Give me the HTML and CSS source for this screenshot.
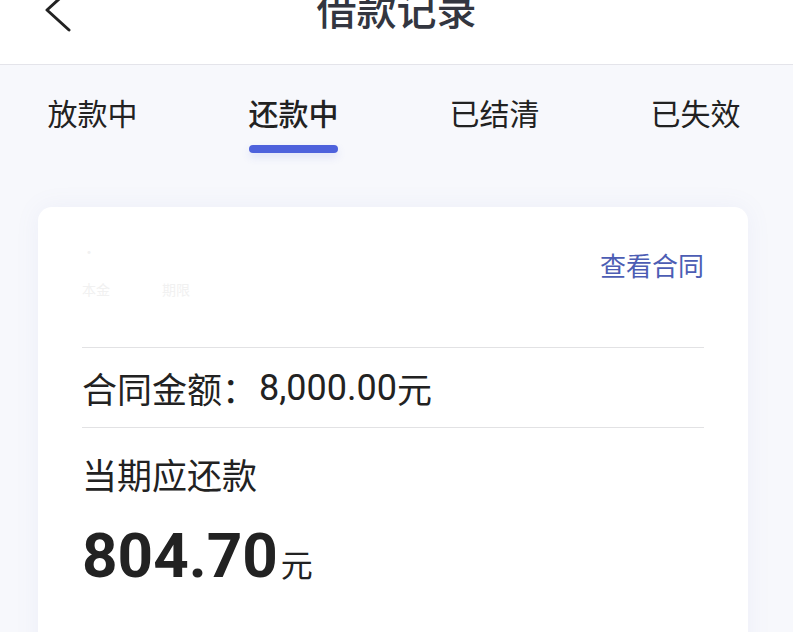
FILE: index.html
```html
<!DOCTYPE html>
<html lang="zh-CN">
<head>
    <meta charset="UTF-8">
    <title>借款记录</title>
    <link rel="stylesheet" href="styles.css">
</head>
<body>
<header class="topbar">
    <a class="back" href="#">
        <svg width="30" height="44" viewBox="0 0 30 44">
            <polyline points="24,2 2,22 24,42" fill="none" stroke="#222" stroke-width="3" stroke-linecap="round" stroke-linejoin="round"/>
        </svg>
    </a>
    <h1 class="title">借款记录</h1>
    <span></span>
</header>

<nav class="tabs">
    <div class="tab">放款中</div>
    <div class="tab active">还款中</div>
    <div class="tab">已结清</div>
    <div class="tab">已失效</div>
</nav>

<section class="card">
    <div class="card-head">
        <div class="masked">
            <span class="masked-line">·</span>
            <span class="masked-line small"><i>本金</i><i>期限</i></span>
        </div>
        <a class="contract" href="#">查看合同</a>
    </div>
    <div class="row amount-total">合同金额：<span class="num">8,000.00</span>元</div>
    <div class="due">
        <div class="due-label">当期应还款</div>
        <div class="due-value"><span class="num">804.70</span><span class="unit">元</span></div>
    </div>
</section>
</body>
</html>
```

FILE: styles.css
```css
* {
    box-sizing: border-box;
}
body {
    margin: 0;
    background: #f7f8fc;
    font-family: "Noto Sans CJK SC", "Noto Sans", sans-serif;
    color: #222;
    overflow: hidden;
}
.topbar {
    height: 65px;
    background: #fff;
    border-bottom: 1px solid #e4e4ea;
    display: grid;
    grid-template-columns: 1fr auto 1fr;
    align-items: start;
}
.back {
    display: block;
    margin-left: 45px;
    margin-top: -12px;
    width: 30px;
}
.back svg {
    display: block;
}
.title {
    margin: -12px 0 0;
    font-size: 40px;
    line-height: 40px;
    font-weight: 500;
    color: #333640;
}
.tabs {
    display: flex;
    gap: 110px;
    padding: 27px 0 0 47px;
}
.tab {
    width: 91px;
    font-size: 30px;
    line-height: 40px;
    text-align: center;
    padding-bottom: 21px;
    position: relative;
    color: #222;
}
.tab.active {
    font-weight: 500;
}
.tab.active::after {
    content: "";
    position: absolute;
    left: 1px;
    right: 1px;
    bottom: 0;
    height: 8px;
    border-radius: 4px;
    background: #4e62dc;
    box-shadow: 0 4px 8px rgba(78, 98, 220, 0.15);
}
.card {
    margin: 54px 45px 0 38px;
    background: #fff;
    border-radius: 14px;
    box-shadow: 0 0 24px rgba(120, 130, 200, 0.08);
    padding: 0 44px 60px;
}
.card-head {
    height: 141px;
    display: flex;
    justify-content: space-between;
    align-items: flex-start;
    border-bottom: 1px solid #e2e2e4;
}
.masked {
    display: flex;
    flex-direction: column;
    padding-top: 34px;
    gap: 18px;
    color: #f1f1f1;
    font-size: 14px;
}
.masked-line i {
    font-style: normal;
    margin-right: 52px;
}
.contract {
    margin-top: 40px;
    font-size: 26px;
    line-height: 36px;
    color: #4c5db4;
    text-decoration: none;
}
.row {
    height: 80px;
    display: flex;
    align-items: center;
    border-bottom: 1px solid #e2e2e4;
}
.amount-total {
    font-size: 35px;
}
.num {
    font-family: Roboto, "Noto Sans CJK SC", sans-serif;
}
.amount-total .num {
    font-size: 36px;
    margin-left: 2px;
}
.due {
    padding-top: 22px;
}
.due-label {
    font-size: 35px;
    line-height: 48px;
}
.due-value {
    margin-top: 22px;
    line-height: 72px;
}
.due-value .num {
    font-size: 62px;
    font-weight: 700;
}
.unit {
    font-size: 32px;
    margin-left: 3px;
}
```
